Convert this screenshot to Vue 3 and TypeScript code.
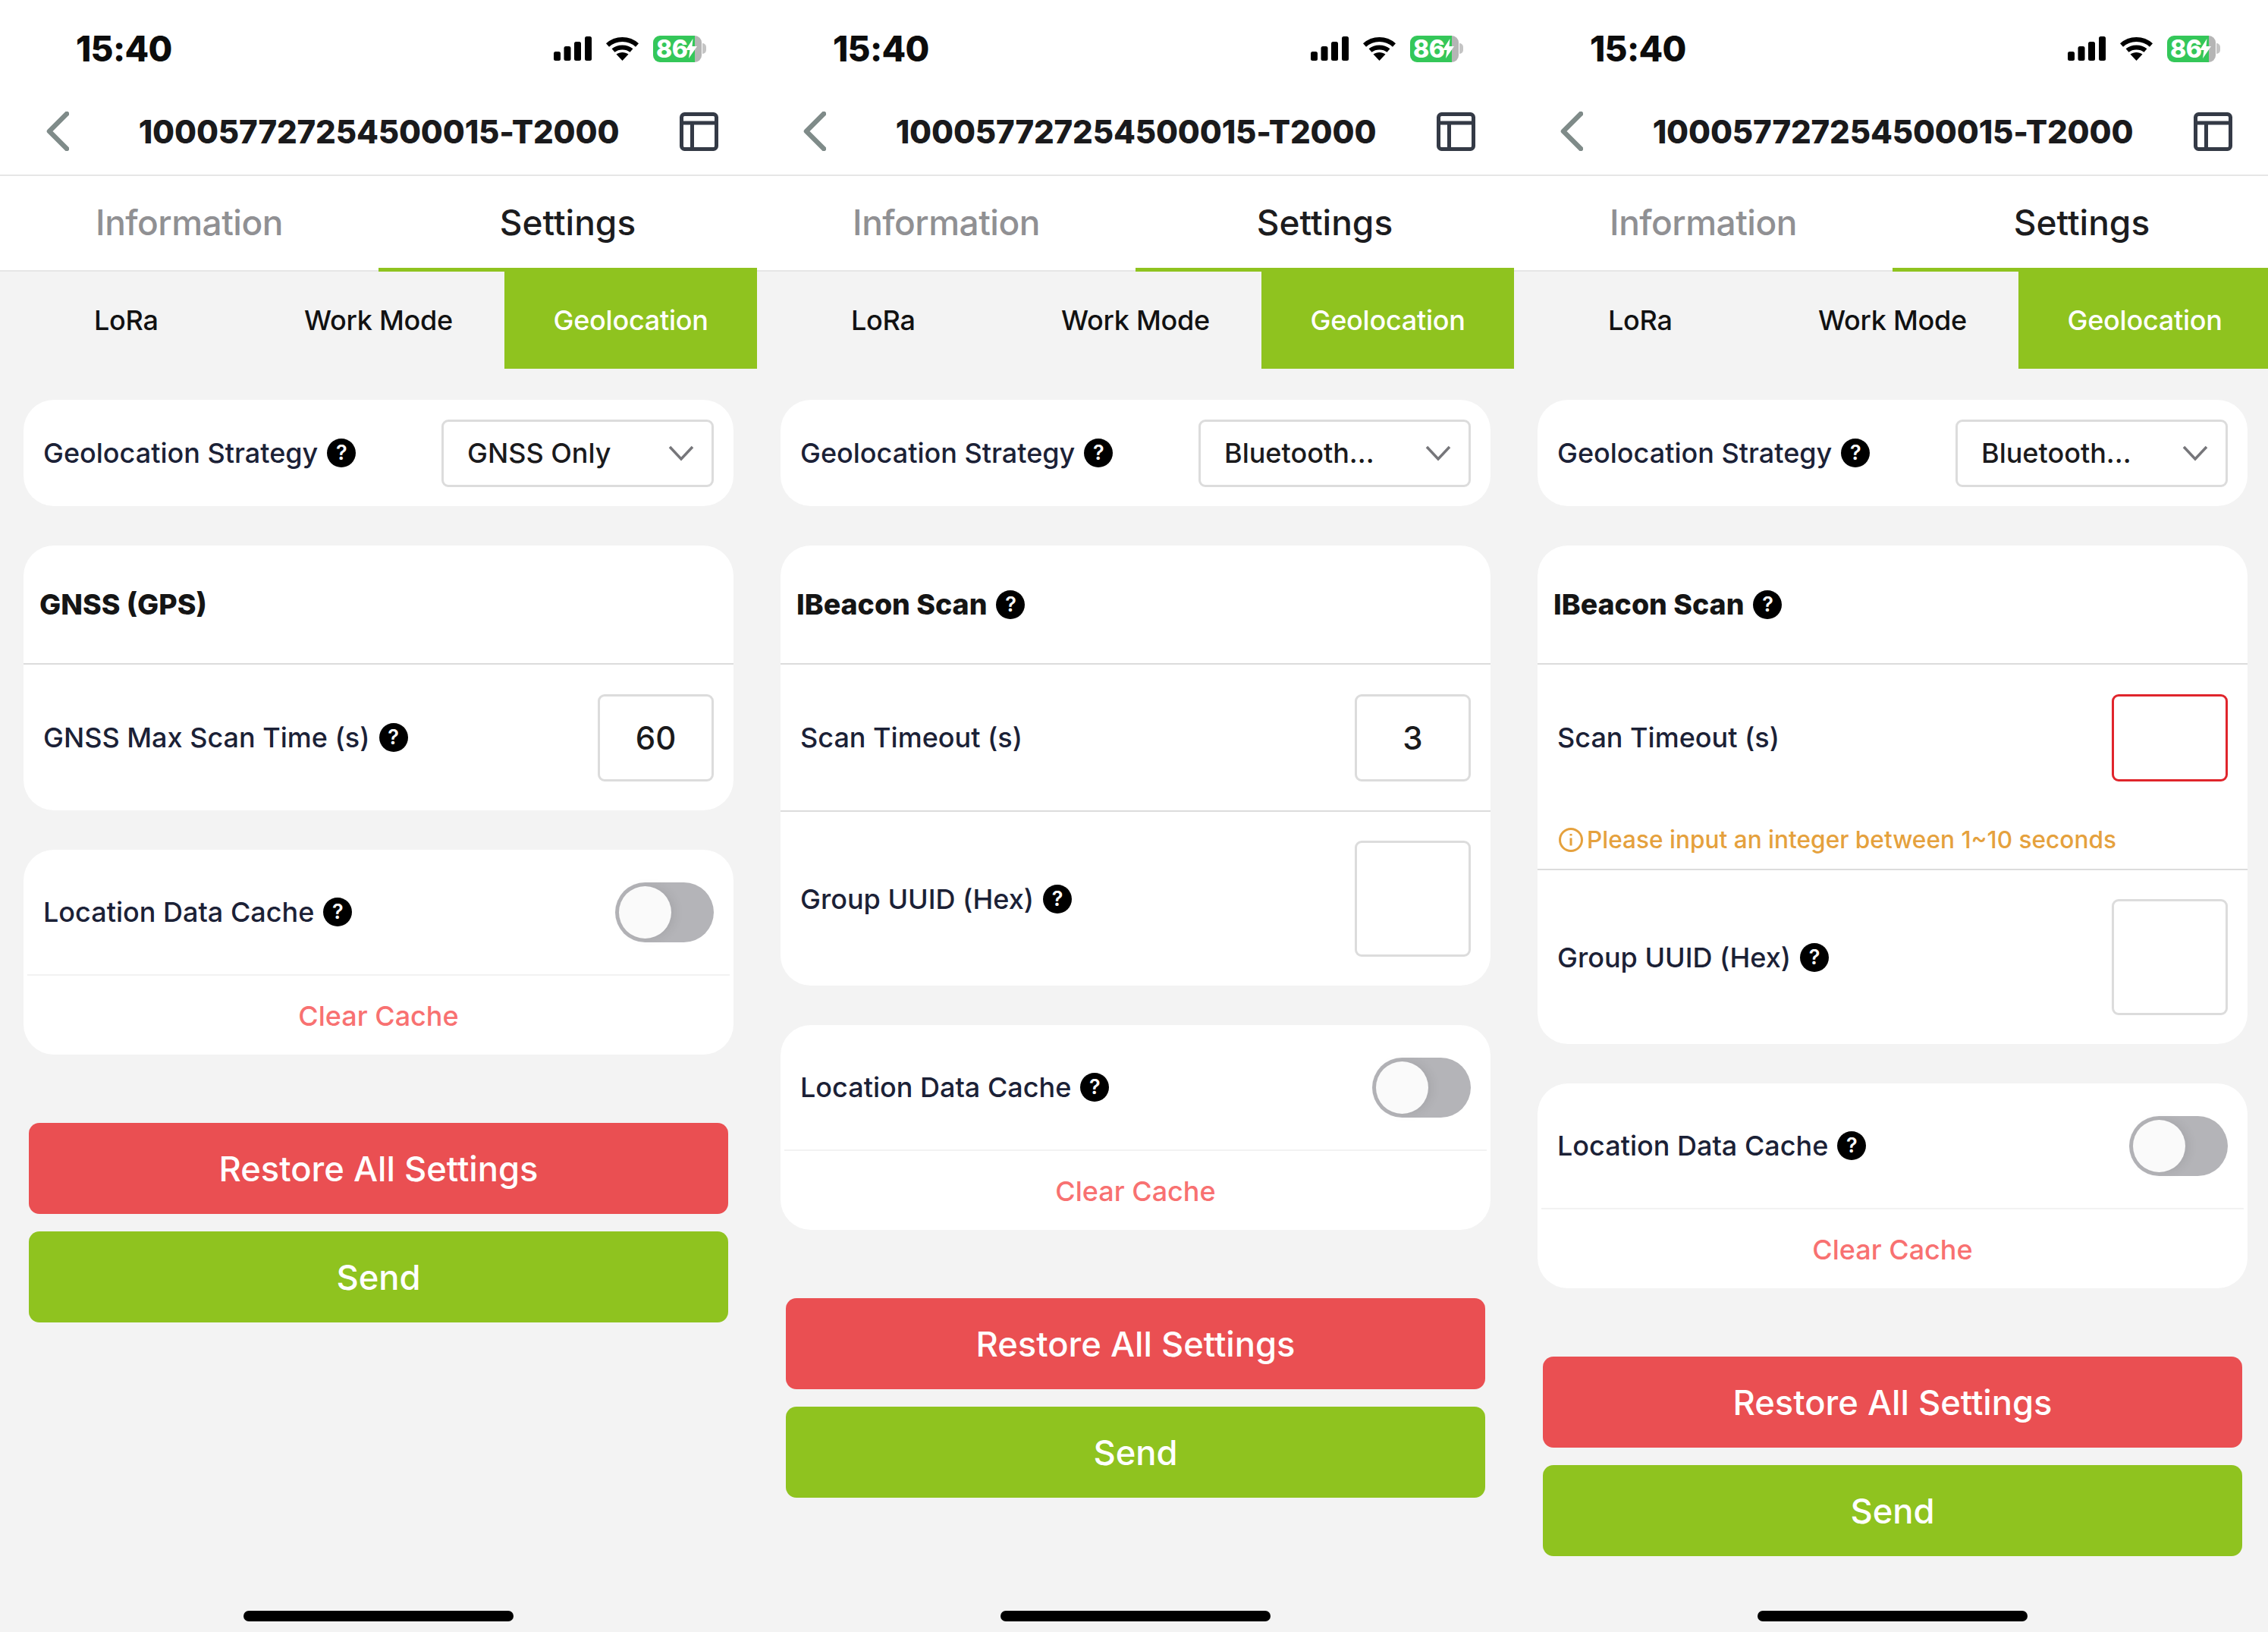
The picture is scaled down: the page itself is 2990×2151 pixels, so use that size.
<script setup lang="ts">
interface Row {
  label: string
  help: boolean
  value: string
  tall?: boolean
  error?: string
}

interface Screen {
  strategy: string
  title: string
  titleHelp: boolean
  rows: Row[]
}

const screens: Screen[] = [
  {
    strategy: 'GNSS Only',
    title: 'GNSS (GPS)',
    titleHelp: false,
    rows: [{ label: 'GNSS Max Scan Time (s)', help: true, value: '60' }]
  },
  {
    strategy: 'Bluetooth...',
    title: 'IBeacon Scan',
    titleHelp: true,
    rows: [
      { label: 'Scan Timeout (s)', help: false, value: '3' },
      { label: 'Group UUID (Hex)', help: true, value: '', tall: true }
    ]
  },
  {
    strategy: 'Bluetooth...',
    title: 'IBeacon Scan',
    titleHelp: true,
    rows: [
      {
        label: 'Scan Timeout (s)',
        help: false,
        value: '',
        error: 'Please input an integer between 1~10 seconds'
      },
      { label: 'Group UUID (Hex)', help: true, value: '', tall: true }
    ]
  }
]
</script>

<template>
  <div class="page">
    <section v-for="(screen, i) in screens" :key="i" class="phone">
      <header class="top">
        <div class="status">
          <span class="time">15:40</span>
          <svg class="signal" width="50" height="32" viewBox="0 0 50 32">
            <rect x="0" y="20" width="9" height="12" rx="2.5" />
            <rect x="13.5" y="13" width="9" height="19" rx="2.5" />
            <rect x="27" y="7" width="9" height="25" rx="2.5" />
            <rect x="41" y="0" width="9" height="32" rx="2.5" />
          </svg>
          <svg class="wifi" width="43" height="32" viewBox="0 0 43 32">
            <path d="M2 11.5C13 1.5 30 1.5 41 11.5" />
            <path d="M9.5 18.5C16 13 27 13 33.5 18.5" />
            <path class="wifi-dot" d="M13.5 23.5C18 20 25 20 29.5 23.5L21.5 32Z" />
          </svg>
          <div class="battery">
            <div class="battery-body">
              <span class="battery-num">86</span>
              <svg class="bolt" width="15" height="26" viewBox="0 0 15 26">
                <path d="M9.5 0 0 15h5.5L4 26l11-16H8.5Z" />
              </svg>
            </div>
            <span class="battery-nub"></span>
          </div>
        </div>
        <nav class="nav">
          <svg class="back" width="30" height="52" viewBox="0 0 30 52">
            <path d="M27 3 4 26l23 23" />
          </svg>
          <h1 class="device">100057727254500015-T2000</h1>
          <svg class="layout" width="51" height="51" viewBox="0 0 51 51">
            <rect x="2.5" y="2.5" width="46" height="46" rx="4" />
            <path d="M2.5 14h46M16.5 14v34.5" />
          </svg>
        </nav>
      </header>

      <div class="tabs">
        <div class="tab">Information</div>
        <div class="tab active">Settings</div>
      </div>

      <div class="subtabs">
        <div class="subtab">LoRa</div>
        <div class="subtab">Work Mode</div>
        <div class="subtab active">Geolocation</div>
      </div>

      <main class="content">
        <div class="card">
          <div class="row strategy">
            <span class="label">Geolocation Strategy<i class="help">?</i></span>
            <div class="select">
              <span>{{ screen.strategy }}</span>
              <svg width="34" height="22" viewBox="0 0 34 22">
                <path d="M2 3l15 16L32 3" />
              </svg>
            </div>
          </div>
        </div>

        <div class="card">
          <div class="card-head">
            {{ screen.title }}<i v-if="screen.titleHelp" class="help">?</i>
          </div>
          <div v-for="row in screen.rows" :key="row.label" class="field">
            <div class="row" :class="{ 'row-tall': row.tall }">
              <span class="label">{{ row.label }}<i v-if="row.help" class="help">?</i></span>
              <div class="input" :class="{ invalid: row.error, tall: row.tall }">{{ row.value }}</div>
            </div>
            <div v-if="row.error" class="error">
              <svg width="32" height="32" viewBox="0 0 32 32">
                <circle cx="16" cy="16" r="14.5" />
                <path d="M16 13.5v10M16 8v2.6" />
              </svg>
              <span>{{ row.error }}</span>
            </div>
          </div>
        </div>

        <div class="card">
          <div class="row cache">
            <span class="label">Location Data Cache<i class="help">?</i></span>
            <div class="toggle"><span class="knob"></span></div>
          </div>
          <div class="clear">Clear Cache</div>
        </div>

        <div class="actions">
          <button class="btn danger" type="button">Restore All Settings</button>
          <button class="btn primary" type="button">Send</button>
        </div>
      </main>

      <div class="home-bar"></div>
    </section>
  </div>
</template>

<style>
html,
body {
  margin: 0;
  background: #f3f3f3;
}
</style>

<style scoped>
.page {
  display: flex;
  width: 2990px;
  height: 2151px;
  overflow: hidden;
  font-family: Inter, 'Noto Sans', sans-serif;
  color: #1b2136;
}

.phone {
  flex: 0 0 998px;
  height: 2151px;
  display: flex;
  flex-direction: column;
  background: #f3f3f3;
}

.top {
  background: #fff;
  border-bottom: 2px solid #e6e6e6;
}

.status {
  height: 104px;
  padding-top: 12px;
  padding-left: 100px;
  display: flex;
  align-items: center;
}

.time {
  width: 630px;
  font-size: 46px;
  font-weight: 800;
  letter-spacing: -0.7px;
  color: #0c0c0c;
}

.signal {
  fill: #000;
}

.wifi {
  margin-left: 19px;
  fill: none;
  stroke: #000;
  stroke-width: 6;
}

.wifi-dot {
  fill: #000;
  stroke: none;
}

.battery {
  margin-left: 19px;
  display: flex;
  align-items: center;
}

.battery-body {
  width: 64px;
  height: 35px;
  border-radius: 9px;
  background: linear-gradient(90deg, #34c759 0 55px, #b5b5b5 55px);
  display: flex;
  align-items: center;
  padding-left: 4px;
  box-sizing: border-box;
  color: #fff;
}

.battery-num {
  font-size: 32px;
  font-weight: 800;
  line-height: 35px;
  letter-spacing: -0.5px;
}

.bolt {
  fill: #fff;
  margin-left: -2px;
}

.battery-nub {
  width: 5px;
  height: 14px;
  margin-left: 1px;
  border-radius: 0 7px 7px 0;
  background: #c4c4c4;
}

.nav {
  height: 114px;
  padding: 0 51px 0 61px;
  display: flex;
  align-items: center;
}

.back {
  flex: none;
  fill: none;
  stroke: #7f8b89;
  stroke-width: 6.5;
  stroke-linecap: round;
  stroke-linejoin: round;
}

.device {
  flex: 1;
  margin: 0;
  padding-left: 12px;
  text-align: center;
  font-size: 42px;
  font-weight: 800;
  letter-spacing: -0.15px;
  color: #1a1a1c;
}

.layout {
  flex: none;
  fill: none;
  stroke: #343a46;
  stroke-width: 5;
}

.tabs {
  display: grid;
  grid-template-columns: 1fr 1fr;
  background: #fff;
}

.tab {
  height: 124px;
  line-height: 122px;
  text-align: center;
  font-size: 46px;
  font-weight: 500;
  letter-spacing: -0.5px;
  color: #909093;
  border-bottom: 2px solid #e6e6e6;
}

.tab.active {
  height: 121px;
  line-height: 122px;
  letter-spacing: 0;
  color: #1c1c1e;
  border-bottom: 5px solid #8fc31f;
}

.subtabs {
  display: grid;
  grid-template-columns: repeat(3, 1fr);
}

.subtab {
  height: 128px;
  line-height: 128px;
  text-align: center;
  font-size: 36px;
  font-weight: 500;
  letter-spacing: -0.25px;
  color: #111;
}

.subtab.active {
  background: #8fc31f;
  color: #fff;
}

.content {
  padding: 41px 31px 0;
  display: flex;
  flex-direction: column;
  gap: 52px;
}

.card {
  background: #fff;
  border-radius: 40px;
  overflow: hidden;
}

.card-head {
  height: 155px;
  padding-left: 21px;
  display: flex;
  align-items: center;
  font-size: 37.5px;
  font-weight: 800;
  color: #151515;
  border-bottom: 2px solid #dcdcdc;
}

.row {
  height: 192px;
  padding: 0 26px;
  display: flex;
  align-items: center;
  justify-content: space-between;
}

.strategy {
  height: 140px;
}

.row-tall {
  height: 229px;
}

.field + .field {
  border-top: 2px solid #dcdcdc;
}

.label {
  display: inline-flex;
  align-items: center;
  font-size: 36px;
  font-weight: 500;
  white-space: nowrap;
}

.help {
  flex: none;
  width: 38px;
  height: 38px;
  margin-left: 12px;
  border-radius: 50%;
  background: #000;
  color: #fff;
  font-size: 27px;
  font-style: normal;
  font-weight: 600;
  line-height: 38px;
  text-align: center;
}

.select {
  width: 359px;
  height: 89px;
  padding: 0 23px 0 31px;
  box-sizing: border-box;
  border: 3px solid #dcdcdc;
  border-radius: 9px;
  display: flex;
  align-items: center;
  justify-content: space-between;
  font-size: 36px;
  font-weight: 500;
  color: #1a1a1c;
}

.select svg {
  fill: none;
  stroke: #76767a;
  stroke-width: 3.5;
}

.input {
  width: 153px;
  height: 115px;
  box-sizing: border-box;
  border: 3px solid #dcdcdc;
  border-radius: 9px;
  display: flex;
  align-items: center;
  justify-content: center;
  font-size: 42px;
  font-weight: 500;
  color: #1a1a1c;
}

.input.tall {
  height: 153px;
}

.input.invalid {
  border-color: #e0252c;
}

.error {
  height: 77px;
  display: flex;
  align-items: center;
  gap: 5px;
  padding-left: 28px;
  font-size: 31.6px;
  font-weight: 500;
  color: #e5a13d;
}

.error svg {
  fill: none;
  stroke: #e5a13d;
  stroke-width: 3;
}

.cache {
  height: 164px;
  border-bottom: 2px solid #f2f2f2;
  margin: 0 5px;
  padding: 0 21px;
}

.toggle {
  width: 130px;
  height: 79px;
  border-radius: 40px;
  background: #b4b4b8;
  display: flex;
  align-items: center;
  padding-left: 5px;
  box-sizing: border-box;
}

.knob {
  width: 69px;
  height: 69px;
  border-radius: 50%;
  background: #fafafa;
  box-shadow: 4px 0 14px rgba(0, 0, 0, 0.08);
}

.clear {
  height: 104px;
  line-height: 106px;
  text-align: center;
  font-size: 36px;
  font-weight: 500;
  color: #f87171;
}

.actions {
  margin-top: 38px;
  padding: 0 7px;
  display: flex;
  flex-direction: column;
  gap: 23px;
}

.btn {
  height: 120px;
  border: none;
  border-radius: 14px;
  font-family: inherit;
  font-size: 45.3px;
  font-weight: 500;
  color: #fff;
}

.danger {
  background: #ea4f52;
}

.primary {
  background: #8fc31f;
}

.home-bar {
  flex: none;
  width: 356px;
  height: 14px;
  margin: auto auto 14px;
  border-radius: 7px;
  background: #000;
}
</style>
